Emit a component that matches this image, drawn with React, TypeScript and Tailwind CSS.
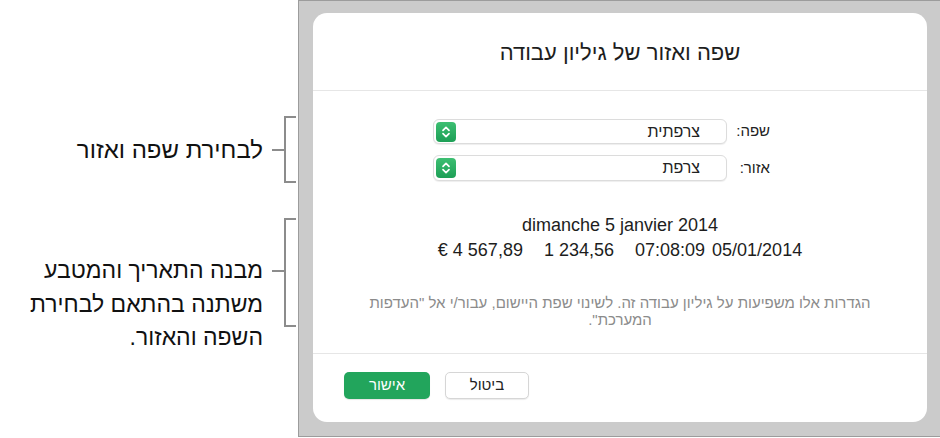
import React from 'react';

function Stepper() {
  return (
    <svg width="20" height="20" viewBox="0 0 20 20" className="shrink-0">
      <defs>
        <linearGradient id="stg" x1="0" y1="0" x2="0" y2="1">
          <stop offset="0" stopColor="#3dbf72" />
          <stop offset="1" stopColor="#1d9f56" />
        </linearGradient>
      </defs>
      <rect x="0" y="0" width="20" height="20" rx="4" fill="url(#stg)" />
      <path d="M7 8.3 L10 5.3 L13 8.3" stroke="#fff" strokeWidth="1.7" fill="none" strokeLinecap="round" strokeLinejoin="round" />
      <path d="M7 11.7 L10 14.7 L13 11.7" stroke="#fff" strokeWidth="1.7" fill="none" strokeLinecap="round" strokeLinejoin="round" />
    </svg>
  );
}

function SelectRow({ label, value, tall }: { label: string; value: string; tall?: boolean }) {
  return (
    <div className={`flex items-center gap-[11px] ${tall ? 'h-[26px]' : 'h-[25px]'}`}>
      <div className="w-[32px] text-right text-[15px] text-[#222]">{label}</div>
      <div className="w-[294px] h-full rounded-[6px] border border-[#dcdcdc] bg-white shadow-[0_1px_1px_rgba(0,0,0,0.07)] flex items-center justify-between pr-[26px] pl-[2px] text-[16px] text-[#222]">
        <span>{value}</span>
        <Stepper />
      </div>
    </div>
  );
}

export default function App() {
  return (
    <div className="w-[940px] h-[438px] flex bg-white overflow-hidden font-['Liberation_Sans','Noto_Sans',sans-serif]">
      {/* callouts */}
      <div className="w-[298px] shrink-0 flex flex-col text-[23px] text-[#111]">
        <div className="mt-[116px] h-[67px] flex items-center justify-end mr-[2px]">
          <div dir="rtl" className="leading-[33px] text-[24px]">לבחירת שפה ואזור</div>
          <div className="w-[12px] h-[2px] bg-[#8c8c8c] ml-[9px]" />
          <div className="w-[12px] h-full border-l-2 border-y-2 border-[#8c8c8c]" />
        </div>
        <div className="mt-[35px] flex items-start justify-end mr-[2px]">
          <div dir="rtl" className="leading-[33.5px] text-right pt-[36px]">
            מבנה התאריך והמטבע
            <br />
            משתנה בהתאם לבחירת
            <br />
            השפה והאזור.
          </div>
          <div className="w-[12px] h-[2px] bg-[#8c8c8c] ml-[9px] mt-[52px]" />
          <div className="w-[12px] h-[109px] border-l-2 border-y-2 border-[#8c8c8c]" />
        </div>
      </div>

      {/* window */}
      <div className="flex-1 h-[437px] border-l border-y border-[#9c9c9c] bg-[#cbcbcb] pl-[14px] pt-[12px] pr-[13px] pb-[14px]">
        <div className="h-full bg-white rounded-[14px] flex flex-col">
          <div dir="rtl" className="h-[78px] shrink-0 flex items-center justify-center border-b border-[#e6e6e6] text-[22px] text-[#1d1d1d] pt-[1px]">
            שפה ואזור של גיליון עבודה
          </div>

          <div className="flex-1 flex flex-col">
            <div dir="rtl" className="pt-[28px] pr-[157px] flex flex-col gap-[11px]">
              <SelectRow label="שפה:" value="צרפתית" />
              <SelectRow label="אזור:" value="צרפת" tall />
            </div>

            <div className="mt-[32px] text-[18px] leading-[25px] text-[#1d1d1d] text-center">
              dimanche 5 janvier 2014
            </div>
            <div dir="ltr" className="flex justify-center text-[18px] leading-[25px] text-[#1d1d1d]">
              <span className="mr-[21px]">€ 4 567,89</span>
              <span className="mr-[21px]">1 234,56</span>
              <span className="mr-[7px]">07:08:09</span>
              <span>05/01/2014</span>
            </div>

            <div dir="rtl" className="mt-[31px] text-[15px] leading-[17px] text-[#8b8b8b] text-center">
              הגדרות אלו משפיעות על גיליון עבודה זה. לשינוי שפת היישום, עבור/י אל "העדפות
              <br />
              המערכת".
            </div>
          </div>

          <div className="shrink-0 border-t border-[#e6e6e6] pt-[18px] pb-[23px] pl-[31px] flex gap-[15px]">
            <button className="w-[86px] h-[27px] rounded-[5px] bg-[#22a55c] text-white text-[15px] shadow-[0_1px_1px_rgba(0,0,0,0.1)]">
              אישור
            </button>
            <button className="w-[84px] h-[27px] rounded-[5px] bg-white border border-[#d6d6d6] text-[#222] text-[15px] shadow-[0_1px_1px_rgba(0,0,0,0.08)]">
              ביטול
            </button>
          </div>
        </div>
      </div>
    </div>
  );
}
